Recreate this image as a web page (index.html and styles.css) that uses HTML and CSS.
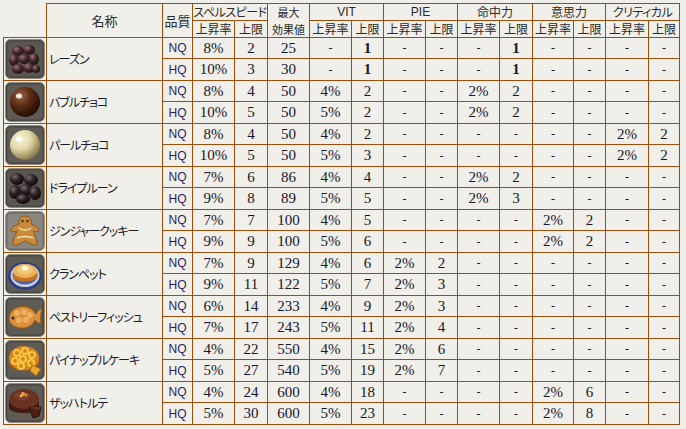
FILE: index.html
```html
<!DOCTYPE html>
<html lang="ja">
<head>
<meta charset="utf-8">
<title>食事一覧</title>
<link rel="stylesheet" href="styles.css">
</head>
<body>
<table class="food">
<colgroup>
<col style="width:43px"><col style="width:116px"><col style="width:30px"><col style="width:42px"><col style="width:33px"><col style="width:42px"><col style="width:42px"><col style="width:32px"><col style="width:42px"><col style="width:32px"><col style="width:42px"><col style="width:33px"><col style="width:41px"><col style="width:32px"><col style="width:43px"><col style="width:31px">
</colgroup>
<thead>
<tr class="h1">
<th class="blank" rowspan="2"></th>
<th rowspan="2" class="big">名称</th>
<th rowspan="2" class="big">品質</th>
<th colspan="2" class="tight">スペルスピード</th>
<th rowspan="2" class="two"><span class="ln">最大</span><span class="ln">効果値</span></th>
<th colspan="2" class="lat">VIT</th>
<th colspan="2" class="lat">PIE</th>
<th colspan="2">命中力</th>
<th colspan="2">意思力</th>
<th colspan="2" class="tight2">クリティカル</th>
</tr>
<tr class="h2">
<th>上昇率</th><th>上限</th>
<th>上昇率</th><th>上限</th>
<th>上昇率</th><th>上限</th>
<th>上昇率</th><th>上限</th>
<th>上昇率</th><th>上限</th>
<th>上昇率</th><th>上限</th>
</tr>
</thead>
<tbody>
<!-- 1 raisin -->
<tr class="nq">
<td rowspan="2" class="ic"><svg class="icon" viewBox="0 0 40 40"><defs><radialGradient id="g1" cx="35%" cy="30%" r="70%"><stop offset="0" stop-color="#9a7478"/><stop offset="0.5" stop-color="#4a2a30"/><stop offset="1" stop-color="#1e1014"/></radialGradient></defs><rect x="0.5" y="0.5" width="39" height="39" rx="5" fill="#4a4843" stroke="#8e8b85"/><rect x="2.5" y="2.5" width="35" height="35" rx="3" fill="#5a5751"/><ellipse cx="13" cy="12" rx="6" ry="5" fill="url(#g1)"/><ellipse cx="24" cy="11" rx="6" ry="5" fill="url(#g1)"/><ellipse cx="9" cy="21" rx="5" ry="6" fill="url(#g1)"/><ellipse cx="19" cy="20" rx="6" ry="5" fill="url(#g1)"/><ellipse cx="29" cy="20" rx="5" ry="6" fill="url(#g1)"/><ellipse cx="13" cy="30" rx="6" ry="5" fill="url(#g1)"/><ellipse cx="24" cy="29" rx="6" ry="5" fill="url(#g1)"/><ellipse cx="31" cy="30" rx="4" ry="4" fill="url(#g1)"/></svg></td>
<td rowspan="2" class="name">レーズン</td>
<td class="q">NQ</td><td>8%</td><td>2</td><td>25</td><td class="d">-</td><td class="b">1</td><td class="d">-</td><td class="d">-</td><td class="d">-</td><td class="b">1</td><td class="d">-</td><td class="d">-</td><td class="d">-</td><td class="d">-</td>
</tr>
<tr class="hq">
<td class="q">HQ</td><td>10%</td><td>3</td><td>30</td><td class="d">-</td><td class="b">1</td><td class="d">-</td><td class="d">-</td><td class="d">-</td><td class="b">1</td><td class="d">-</td><td class="d">-</td><td class="d">-</td><td class="d">-</td>
</tr>
<!-- 2 bubble choco -->
<tr class="nq">
<td rowspan="2" class="ic"><svg class="icon" viewBox="0 0 40 40"><defs><radialGradient id="g2" cx="35%" cy="30%" r="70%"><stop offset="0" stop-color="#a0684a"/><stop offset="0.45" stop-color="#5e2e16"/><stop offset="1" stop-color="#260e04"/></radialGradient></defs><rect x="0.5" y="0.5" width="39" height="39" rx="5" fill="#4a4843" stroke="#8e8b85"/><rect x="2.5" y="2.5" width="35" height="35" rx="3" fill="#5e5b55"/><circle cx="20" cy="20" r="15" fill="url(#g2)"/><ellipse cx="14" cy="14" rx="3" ry="2.5" fill="#fff" opacity="0.9"/></svg></td>
<td rowspan="2" class="name">バブルチョコ</td>
<td class="q">NQ</td><td>8%</td><td>4</td><td>50</td><td>4%</td><td>2</td><td class="d">-</td><td class="d">-</td><td>2%</td><td>2</td><td class="d">-</td><td class="d">-</td><td class="d">-</td><td class="d">-</td>
</tr>
<tr class="hq">
<td class="q">HQ</td><td>10%</td><td>5</td><td>50</td><td>5%</td><td>2</td><td class="d">-</td><td class="d">-</td><td>2%</td><td>2</td><td class="d">-</td><td class="d">-</td><td class="d">-</td><td class="d">-</td>
</tr>
<!-- 3 pearl choco -->
<tr class="nq">
<td rowspan="2" class="ic"><svg class="icon" viewBox="0 0 40 40"><defs><radialGradient id="g3" cx="35%" cy="30%" r="70%"><stop offset="0" stop-color="#fbf6dc"/><stop offset="0.5" stop-color="#e2d7a8"/><stop offset="1" stop-color="#8c7f4c"/></radialGradient></defs><rect x="0.5" y="0.5" width="39" height="39" rx="5" fill="#4a4843" stroke="#8e8b85"/><rect x="2.5" y="2.5" width="35" height="35" rx="3" fill="#5e5b55"/><circle cx="20" cy="20" r="15" fill="url(#g3)"/><ellipse cx="14" cy="14" rx="3" ry="2.5" fill="#fff"/></svg></td>
<td rowspan="2" class="name">パールチョコ</td>
<td class="q">NQ</td><td>8%</td><td>4</td><td>50</td><td>4%</td><td>2</td><td class="d">-</td><td class="d">-</td><td class="d">-</td><td class="d">-</td><td class="d">-</td><td class="d">-</td><td>2%</td><td>2</td>
</tr>
<tr class="hq">
<td class="q">HQ</td><td>10%</td><td>5</td><td>50</td><td>5%</td><td>3</td><td class="d">-</td><td class="d">-</td><td class="d">-</td><td class="d">-</td><td class="d">-</td><td class="d">-</td><td>2%</td><td>2</td>
</tr>
<!-- 4 prune -->
<tr class="nq">
<td rowspan="2" class="ic"><svg class="icon" viewBox="0 0 40 40"><defs><radialGradient id="g4" cx="35%" cy="30%" r="70%"><stop offset="0" stop-color="#7e6a70"/><stop offset="0.5" stop-color="#2e2226"/><stop offset="1" stop-color="#120a0c"/></radialGradient></defs><rect x="0.5" y="0.5" width="39" height="39" rx="5" fill="#4a4843" stroke="#8e8b85"/><rect x="2.5" y="2.5" width="35" height="35" rx="3" fill="#5a5751"/><ellipse cx="12" cy="11" rx="7" ry="6" fill="url(#g4)"/><ellipse cx="26" cy="12" rx="7" ry="6" fill="url(#g4)"/><ellipse cx="10" cy="24" rx="6" ry="7" fill="url(#g4)"/><ellipse cx="21" cy="22" rx="7" ry="6" fill="url(#g4)"/><ellipse cx="30" cy="25" rx="6" ry="7" fill="url(#g4)"/><ellipse cx="18" cy="31" rx="7" ry="5" fill="url(#g4)"/></svg></td>
<td rowspan="2" class="name">ドライプルーン</td>
<td class="q">NQ</td><td>7%</td><td>6</td><td>86</td><td>4%</td><td>4</td><td class="d">-</td><td class="d">-</td><td>2%</td><td>2</td><td class="d">-</td><td class="d">-</td><td class="d">-</td><td class="d">-</td>
</tr>
<tr class="hq">
<td class="q">HQ</td><td>9%</td><td>8</td><td>89</td><td>5%</td><td>5</td><td class="d">-</td><td class="d">-</td><td>2%</td><td>3</td><td class="d">-</td><td class="d">-</td><td class="d">-</td><td class="d">-</td>
</tr>
<!-- 5 ginger cookie -->
<tr class="nq">
<td rowspan="2" class="ic"><svg class="icon" viewBox="0 0 40 40"><rect x="0.5" y="0.5" width="39" height="39" rx="5" fill="#6e6b65" stroke="#9a978f"/><rect x="2.5" y="2.5" width="35" height="35" rx="3" fill="#8a8780"/><path d="M20 5 C25 5 27 9 26 13 C29 14 33 16 34 19 C34 21 31 21 28 20 C30 25 33 30 32 34 C28 35 24 32 20 30 C16 32 12 35 8 34 C7 30 10 25 12 20 C9 21 6 21 6 19 C7 16 11 14 14 13 C13 9 15 5 20 5 Z" fill="#c98a3c" stroke="#8a5620" stroke-width="1"/><circle cx="17.5" cy="10" r="1.2" fill="#4a2a10"/><circle cx="22.5" cy="10" r="1.2" fill="#4a2a10"/><path d="M14 17 Q20 21 26 17" stroke="#f4e4c0" stroke-width="1.5" fill="none"/><path d="M12 27 Q20 24 28 27" stroke="#f4e4c0" stroke-width="1.5" fill="none"/></svg></td>
<td rowspan="2" class="name">ジンジャークッキー</td>
<td class="q">NQ</td><td>7%</td><td>7</td><td>100</td><td>4%</td><td>5</td><td class="d">-</td><td class="d">-</td><td class="d">-</td><td class="d">-</td><td>2%</td><td>2</td><td class="d">-</td><td class="d">-</td>
</tr>
<tr class="hq">
<td class="q">HQ</td><td>9%</td><td>9</td><td>100</td><td>5%</td><td>6</td><td class="d">-</td><td class="d">-</td><td class="d">-</td><td class="d">-</td><td>2%</td><td>2</td><td class="d">-</td><td class="d">-</td>
</tr>
<!-- 6 crumpet -->
<tr class="nq">
<td rowspan="2" class="ic"><svg class="icon" viewBox="0 0 40 40"><rect x="0.5" y="0.5" width="39" height="39" rx="5" fill="#4a4843" stroke="#8e8b85"/><rect x="2.5" y="2.5" width="35" height="35" rx="3" fill="#5e5b55"/><ellipse cx="20" cy="22" rx="17" ry="14" fill="#2c3f86"/><ellipse cx="20" cy="21.5" rx="14.5" ry="11.5" fill="#c8cedc"/><ellipse cx="20" cy="21" rx="12.5" ry="9.5" fill="#4a5fa8"/><path d="M8 17 L8 23 C8 29 32 29 32 23 L32 17 Z" fill="#c8741e"/><ellipse cx="20" cy="17" rx="12" ry="7" fill="#eab25a"/><ellipse cx="20" cy="16" rx="8" ry="4.5" fill="#f2c878"/><ellipse cx="20" cy="14" rx="3.5" ry="2.5" fill="#fff6c8"/></svg></td>
<td rowspan="2" class="name">クランペット</td>
<td class="q">NQ</td><td>7%</td><td>9</td><td>129</td><td>4%</td><td>6</td><td>2%</td><td>2</td><td class="d">-</td><td class="d">-</td><td class="d">-</td><td class="d">-</td><td class="d">-</td><td class="d">-</td>
</tr>
<tr class="hq">
<td class="q">HQ</td><td>9%</td><td>11</td><td>122</td><td>5%</td><td>7</td><td>2%</td><td>3</td><td class="d">-</td><td class="d">-</td><td class="d">-</td><td class="d">-</td><td class="d">-</td><td class="d">-</td>
</tr>
<!-- 7 pastry fish -->
<tr class="nq">
<td rowspan="2" class="ic"><svg class="icon" viewBox="0 0 40 40"><rect x="0.5" y="0.5" width="39" height="39" rx="5" fill="#4a4843" stroke="#8e8b85"/><rect x="2.5" y="2.5" width="35" height="35" rx="3" fill="#5e5b55"/><path d="M4 21 C5 12 14 8 22 10 C26 11 29 14 31 17 C33 13 36 11 37 12 C36 16 35 20 36 26 C34 27 31 25 30 23 C28 28 22 32 15 31 C8 30 4 26 4 21 Z" fill="#d8903a" stroke="#9a5a18" stroke-width="1"/><circle cx="12" cy="16" r="3" fill="#eeb060"/><circle cx="19" cy="15" r="3" fill="#eeb060"/><circle cx="25" cy="18" r="3" fill="#eeb060"/><circle cx="14" cy="23" r="3" fill="#eeb060"/><circle cx="21" cy="23" r="3" fill="#eeb060"/><circle cx="8" cy="21" r="1.6" fill="#3a2a40"/></svg></td>
<td rowspan="2" class="name">ペストリーフィッシュ</td>
<td class="q">NQ</td><td>6%</td><td>14</td><td>233</td><td>4%</td><td>9</td><td>2%</td><td>3</td><td class="d">-</td><td class="d">-</td><td class="d">-</td><td class="d">-</td><td class="d">-</td><td class="d">-</td>
</tr>
<tr class="hq">
<td class="q">HQ</td><td>7%</td><td>17</td><td>243</td><td>5%</td><td>11</td><td>2%</td><td>4</td><td class="d">-</td><td class="d">-</td><td class="d">-</td><td class="d">-</td><td class="d">-</td><td class="d">-</td>
</tr>
<!-- 8 pineapple cake -->
<tr class="nq">
<td rowspan="2" class="ic"><svg class="icon" viewBox="0 0 40 40"><rect x="0.5" y="0.5" width="39" height="39" rx="5" fill="#4a4843" stroke="#8e8b85"/><rect x="2.5" y="2.5" width="35" height="35" rx="3" fill="#5e5b55"/><path d="M4 18 L4 23 C4 33 34 33 34 23 L34 18 Z" fill="#a85a14"/><ellipse cx="19" cy="18" rx="15" ry="12" fill="#d8841e"/><g fill="none" stroke="#f6c840" stroke-width="2"><circle cx="12" cy="13" r="3"/><circle cx="20" cy="11" r="3"/><circle cx="27" cy="15" r="3"/><circle cx="10" cy="21" r="3"/><circle cx="18" cy="19" r="3"/><circle cx="26" cy="23" r="3"/><circle cx="16" cy="26" r="3"/></g><path d="M27 25 L36 29 L31 36 L25 31 Z" fill="#e8a830" stroke="#a85a14"/></svg></td>
<td rowspan="2" class="name">パイナップルケーキ</td>
<td class="q">NQ</td><td>4%</td><td>22</td><td>550</td><td>4%</td><td>15</td><td>2%</td><td>6</td><td class="d">-</td><td class="d">-</td><td class="d">-</td><td class="d">-</td><td class="d">-</td><td class="d">-</td>
</tr>
<tr class="hq">
<td class="q">HQ</td><td>5%</td><td>27</td><td>540</td><td>5%</td><td>19</td><td>2%</td><td>7</td><td class="d">-</td><td class="d">-</td><td class="d">-</td><td class="d">-</td><td class="d">-</td><td class="d">-</td>
</tr>
<!-- 9 sachertorte -->
<tr class="nq">
<td rowspan="2" class="ic"><svg class="icon" viewBox="0 0 40 40"><rect x="0.5" y="0.5" width="39" height="39" rx="5" fill="#4a4843" stroke="#8e8b85"/><rect x="2.5" y="2.5" width="35" height="35" rx="3" fill="#5e5b55"/><path d="M4 16 L4 24 C4 32 34 32 34 24 L34 16 Z" fill="#3e1a10"/><ellipse cx="19" cy="16" rx="15" ry="10" fill="#6a3222"/><ellipse cx="17" cy="13" rx="8" ry="4" fill="#7c4030"/><circle cx="18" cy="11" r="2" fill="#f0a030"/><circle cx="21" cy="12" r="1.5" fill="#e88a20"/><circle cx="16" cy="13" r="1.3" fill="#f6c050"/><path d="M24 24 L36 24 L34 33 L28 35 Z" fill="#4a2012" stroke="#2a0e06"/><path d="M24 24 L36 24 L33 27 Z" fill="#6a3222"/></svg></td>
<td rowspan="2" class="name">ザッハトルテ</td>
<td class="q">NQ</td><td>4%</td><td>24</td><td>600</td><td>4%</td><td>18</td><td class="d">-</td><td class="d">-</td><td class="d">-</td><td class="d">-</td><td>2%</td><td>6</td><td class="d">-</td><td class="d">-</td>
</tr>
<tr class="hq">
<td class="q">HQ</td><td>5%</td><td>30</td><td>600</td><td>5%</td><td>23</td><td class="d">-</td><td class="d">-</td><td class="d">-</td><td class="d">-</td><td>2%</td><td>8</td><td class="d">-</td><td class="d">-</td>
</tr>
</tbody>
</table>
</body>
</html>
```
FILE: styles.css
```css
html, body {
  margin: 0;
  padding: 0;
  background: #f1efea;
}
body {
  padding: 3px 0 0 3px;
}
.food {
  border-collapse: collapse;
  table-layout: fixed;
  width: 677px;
  font-family: "Noto Sans CJK JP", sans-serif;
  color: #222;
}
.food th, .food td {
  border: 1px solid #9e4e0c;
  padding: 0;
  text-align: center;
  vertical-align: middle;
  line-height: 1;
  white-space: nowrap;
  overflow: hidden;
}
.food th {
  font-weight: normal;
  font-size: 12px;
  color: #2a2a2a;
  font-feature-settings: "palt";
}
.food th.blank {
  border-top: none;
  border-left: none;
}
.h1, .h2 { height: 17px; }
.food th.big { font-size: 13px; }
.food th.two { font-size: 11px; }
.food th.two .ln {
  display: block;
  height: 16.5px;
  line-height: 16.5px;
}
.food th.tight { letter-spacing: -0.5px; }
.food th.tight2 { letter-spacing: -0.5px; }
.food th.lat { font-family: "Liberation Sans", sans-serif; font-size: 12px; }
.nq { height: 21px; }
.hq { height: 22px; }
.food td {
  font-family: "Liberation Serif", serif;
  font-size: 15px;
  color: #16162c;
}
.food td.d { font-size: 12px; }
.food td.b { font-weight: bold; }
.food td.q {
  font-family: "Liberation Sans", sans-serif;
  font-size: 12px;
  color: #2a1f5e;
}
.food td.name {
  text-align: left;
  padding-left: 2px;
  font-family: "Noto Sans CJK JP", sans-serif;
  font-size: 12px;
  font-feature-settings: "palt";
  color: #1a1a28;
  letter-spacing: -1px;
}
.food td.ic {
  padding: 0;
  line-height: 0;
}
.icon {
  width: 40px;
  height: 40px;
  display: block;
  margin: 0 auto;
}
```
